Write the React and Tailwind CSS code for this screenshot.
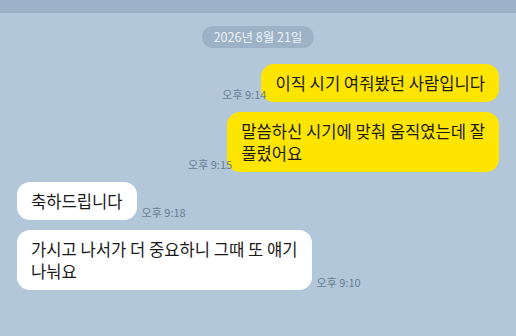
const font = { fontFamily: '"Noto Sans CJK KR", "Noto Sans", sans-serif' };

const Time = ({ children, className = "" }) => (
  <span className={`relative z-10 text-[11px] leading-none text-[#6a7e93] whitespace-nowrap pb-[2px] ${className}`}>{children}</span>
);

const Mine = ({ time, children }) => (
  <div className="flex justify-end items-end">
    <Time className="-mr-[5px]">{time}</Time>
    <div className="bg-[#fee500] text-[#1a1a1a] rounded-[13px] px-[14px] py-[8px] text-[16.6px] leading-[22px] whitespace-nowrap">
      {children}
    </div>
  </div>
);

const Theirs = ({ time, children }) => (
  <div className="flex items-end gap-[5px]">
    <div className="bg-white text-[#1a1a1a] rounded-[13px] px-[14px] py-[8px] text-[16.6px] leading-[22px] whitespace-nowrap">
      {children}
    </div>
    <Time>{time}</Time>
  </div>
);

export default function App() {
  return (
    <div style={font} className="w-[516px] h-[336px] bg-[#b2c7da] overflow-hidden flex flex-col">
      <div className="h-[13px] bg-[#9bb1c7] shrink-0" />
      <div className="flex justify-center mt-[13px]">
        <span className="h-[22px] px-[12px] rounded-full bg-[#9db2c7] text-[#eef2f7] text-[12.5px] leading-[22px]">
          2026년 8월 21일
        </span>
      </div>
      <div className="flex flex-col gap-[10px] px-[17px] mt-[16px]">
        <Mine time="오후 9:14">이직 시기 여줘봤던 사람입니다</Mine>
        <Mine time="오후 9:15">
          말씀하신 시기에 맞춰 움직였는데 잘<br />풀렸어요
        </Mine>
        <Theirs time="오후 9:18">축하드립니다</Theirs>
        <Theirs time="오후 9:10">
          가시고 나서가 더 중요하니 그때 또 얘기<br />나눠요
        </Theirs>
      </div>
    </div>
  );
}
